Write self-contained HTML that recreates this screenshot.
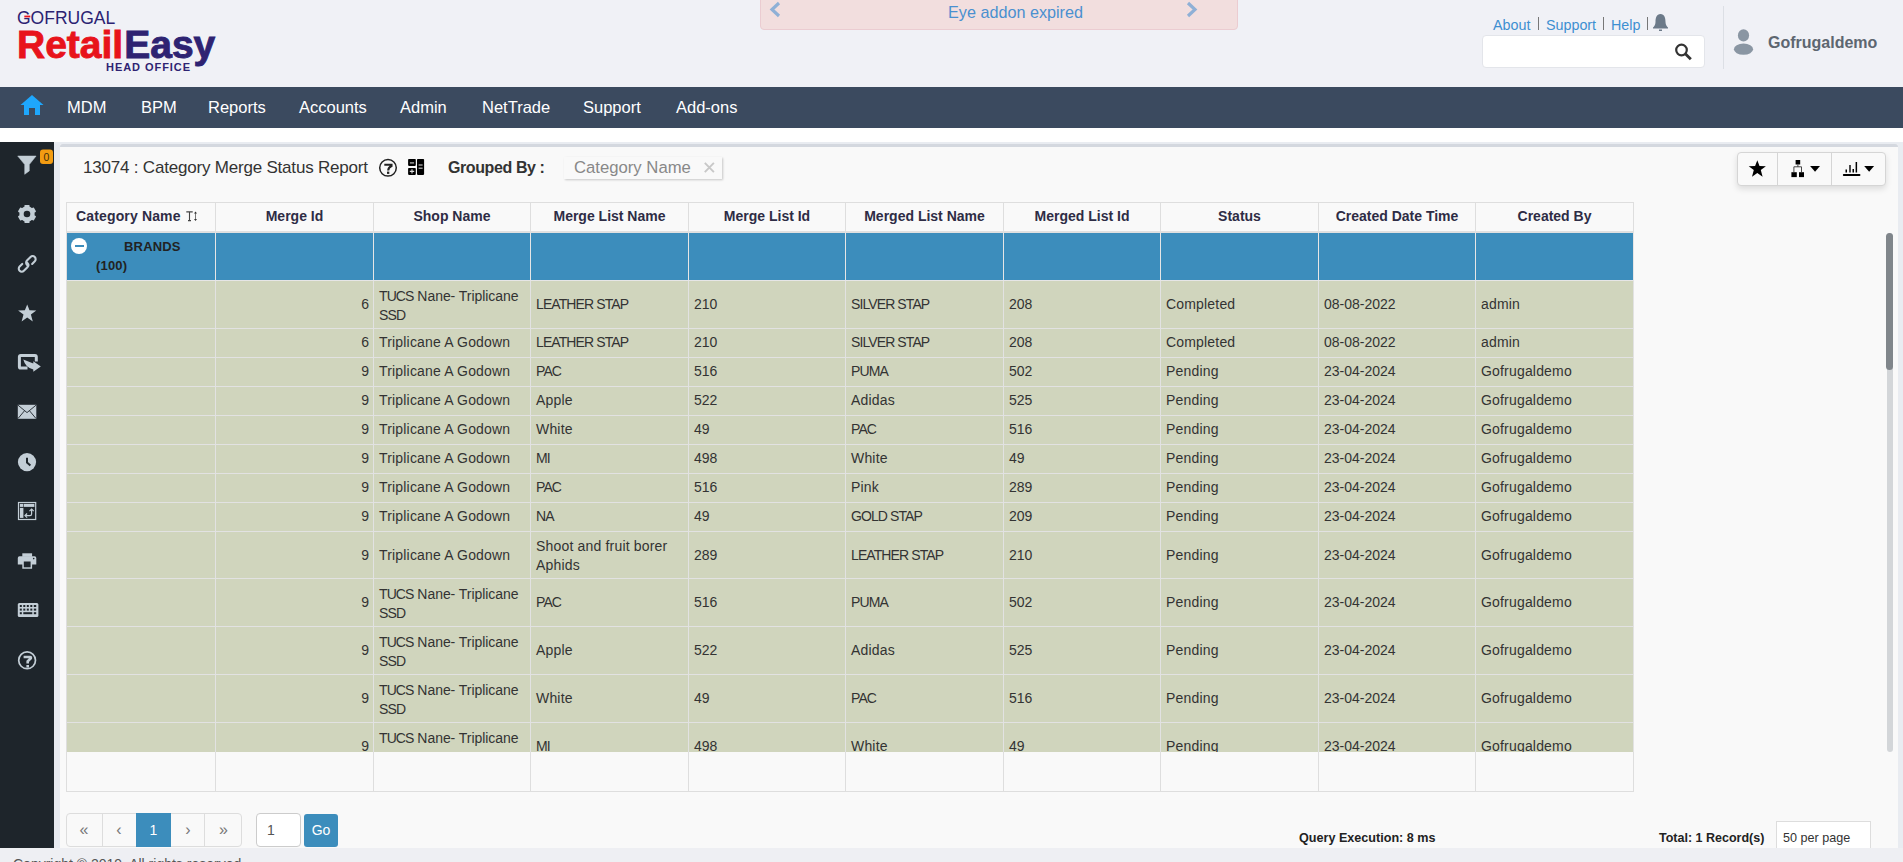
<!DOCTYPE html>
<html><head><meta charset="utf-8">
<style>
*{box-sizing:border-box;margin:0;padding:0}
html,body{width:1903px;height:862px;overflow:hidden;background:#eeeff3;font-family:"Liberation Sans",sans-serif;color:#333;position:relative}
.a{position:absolute;white-space:nowrap}
#hdr{position:absolute;left:0;top:0;width:1903px;height:87px;background:#f0f1f6}
#nav{position:absolute;left:0;top:87px;width:1903px;height:41px;background:#3b4a5f}
#white{position:absolute;left:0;top:128px;width:1903px;height:14px;background:#fff}
#side{position:absolute;left:0;top:142px;width:54px;height:706px;background:#1e252b}
#panel{position:absolute;left:60px;top:144px;width:1838px;height:704px;background:#f9f9f9;border-top:3px solid #d4d8df;border-radius:3px 3px 0 0}
.nv{position:absolute;top:95px;color:#fff;font-size:16.5px;line-height:24px}
#banner{position:absolute;left:760px;top:-4px;width:478px;height:34px;background:#f2dede;border:1px solid #ebccd1;border-radius:4px}
.lnk{color:#3d8fd1;font-size:14.3px}
.sep{position:absolute;width:1px;background:#777}
#search{position:absolute;left:1482px;top:35px;width:223px;height:33px;background:#fff;border:1px solid #e3e5ea;border-radius:4px}
#tbl{position:absolute;left:66px;top:202px;width:1568px;height:590px}
#thead{position:absolute;left:0;top:0;width:1568px;height:31px;background:#f9f9f9;border-top:1px solid #dedede;border-left:1px solid #dedede}
.h{position:absolute;top:0;height:30px;border-right:1px solid #dedede;border-bottom:2px solid #e0e0e0;font-weight:bold;font-size:14px;line-height:18px;padding-top:4px;color:#2e2c45}
.hc{text-align:center}
.hl{padding-left:9px;letter-spacing:0.15px}
.srt{font-weight:normal;font-family:"Liberation Serif",serif;font-size:13px;margin-left:3px}
.ar{font-family:"Liberation Sans",sans-serif;font-size:11px;margin-left:-1px}
#tbody{position:absolute;left:0;top:31px;width:1568px;height:519px;overflow:hidden;border-left:1px solid #dedede}
.row{position:absolute;left:0;width:1567px;background:#d0d5bd}
.grp{background:#3c8dbc}
.one .c{padding-bottom:2px}
.two .c.ml{padding-top:2px}
.c{position:absolute;top:0;bottom:0;border-right:1px solid #e2e2e2;border-bottom:1px solid #e2e2e2;font-size:14px;line-height:18.7px;display:flex;align-items:center;padding:0 5px;white-space:nowrap;color:#333}
.c.r{justify-content:flex-end;padding-right:4px}
.u{letter-spacing:-0.9px}
.d{letter-spacing:0}
.c{letter-spacing:0.18px}
.grp .c{border-right-color:#e6e6e6;border-bottom-color:#e6e6e6}
.minus{position:absolute;left:4px;top:5px;width:16px;height:16px;border-radius:50%;background:#fff}
.minus:after{content:"";position:absolute;left:3.5px;top:7px;width:9px;height:2px;background:#3c8dbc}
.gt{position:absolute;font-weight:bold;font-size:13px;line-height:19px;color:#222}
#tfoot{position:absolute;left:0;top:550px;width:1568px;height:40px;background:#f9f9f9}
.fc{position:absolute;top:0;height:40px;border-left:1px solid #dedede;border-right:1px solid #dedede;border-bottom:1px solid #dedede}
.ink{fill:#c3ced6}
</style></head><body>
<div id="hdr"></div>
<div id="nav"></div>
<div id="white"></div>
<div id="side"></div>
<div id="panel"></div>
<div class="a" style="left:54px;top:142px;width:6px;height:706px;background:#e7eaf0"></div>
<div class="a" style="left:1898px;top:142px;width:5px;height:706px;background:#e9ecf1"></div>
<div class="a" style="left:54px;top:142px;width:1849px;height:2px;background:#e9ecf1"></div>

<!-- logo -->
<div class="a" style="left:17px;top:8px;font-size:17.5px;line-height:20px;color:#2b2272;letter-spacing:0px">GOFRUGAL</div>
<div class="a" style="left:17px;top:22px;font-size:39px;line-height:46px;font-weight:bold;letter-spacing:0px;-webkit-text-stroke:0.9px"><span style="color:#e8131b;-webkit-text-stroke-color:#e8131b">Retail</span><span style="color:#2e2372;-webkit-text-stroke-color:#2e2372;margin-left:1px">Easy</span></div>
<div class="a" style="left:106px;top:60px;font-size:11px;line-height:14px;font-weight:bold;color:#2e2372;letter-spacing:0.95px">HEAD OFFICE</div>

<!-- banner -->
<div id="banner"></div>
<div class="a" style="left:948px;top:1px;font-size:16.2px;line-height:22px;color:#4a90d0">Eye addon expired</div>

<!-- top links -->
<div class="a lnk" style="left:1493px;top:15.5px;line-height:18px">About</div>
<div class="sep" style="left:1538px;top:17px;height:13px"></div>
<div class="a lnk" style="left:1546px;top:15.5px;line-height:18px">Support</div>
<div class="sep" style="left:1603px;top:17px;height:13px"></div>
<div class="a lnk" style="left:1611px;top:15.5px;line-height:18px">Help</div>
<div class="sep" style="left:1647px;top:17px;height:13px"></div>
<div id="search"></div>
<div class="a" style="left:1723px;top:6px;width:1px;height:63px;background:#dcdfe5"></div>
<div class="a" style="left:1768px;top:33px;font-size:16px;line-height:20px;font-weight:bold;color:#5d6670">Gofrugaldemo</div>

<!-- nav -->
<div class="nv" style="left:67px">MDM</div>
<div class="nv" style="left:141px">BPM</div>
<div class="nv" style="left:208px">Reports</div>
<div class="nv" style="left:299px">Accounts</div>
<div class="nv" style="left:400px">Admin</div>
<div class="nv" style="left:482px">NetTrade</div>
<div class="nv" style="left:583px">Support</div>
<div class="nv" style="left:676px">Add-ons</div>

<!-- title bar -->
<div class="a" style="left:83px;top:158px;font-size:17px;line-height:20px;letter-spacing:-0.2px;color:#333">13074 : Category Merge Status Report</div>
<div class="a" style="left:448px;top:158px;font-size:16px;line-height:20px;font-weight:bold;letter-spacing:-0.4px;color:#333">Grouped By :</div>
<div class="a" style="left:564px;top:157px;width:158px;height:22px;box-shadow:1px 1px 2px #c8c8c8"></div>
<div class="a" style="left:574px;top:158px;font-size:16.7px;line-height:20px;color:#888">Category Name</div>

<!-- toolbar -->
<div class="a" style="left:1737px;top:152px;width:149px;height:34px;border:1px solid #d5d5d5;border-radius:4px;background:#f9f9f9;box-shadow:0 3px 6px rgba(0,0,0,0.12)"></div>
<div class="a" style="left:1777px;top:153px;width:1px;height:32px;background:#d5d5d5"></div>
<div class="a" style="left:1831px;top:153px;width:1px;height:32px;background:#d5d5d5"></div>

<!-- table -->
<div id="tbl">
<div id="thead"><div class="h hl" style="left:0px;width:149px">Category Name</div><div class="h hc" style="left:149px;width:158px">Merge Id</div><div class="h hc" style="left:307px;width:157px">Shop Name</div><div class="h hc" style="left:464px;width:158px">Merge List Name</div><div class="h hc" style="left:622px;width:157px">Merge List Id</div><div class="h hc" style="left:779px;width:158px">Merged List Name</div><div class="h hc" style="left:937px;width:157px">Merged List Id</div><div class="h hc" style="left:1094px;width:158px">Status</div><div class="h hc" style="left:1252px;width:157px">Created Date Time</div><div class="h hc" style="left:1409px;width:158px">Created By</div></div>
<div id="tbody">
<div class="row grp" style="top:0px;height:48px"><div class="c l" style="left:0px;width:149px"><span class="minus"></span><span class="gt" style="left:57px;top:4px">BRANDS</span><span class="gt" style="left:29px;top:22.5px">(100)</span></div><div class="c l" style="left:149px;width:158px"></div><div class="c l" style="left:307px;width:157px"></div><div class="c l" style="left:464px;width:158px"></div><div class="c l" style="left:622px;width:157px"></div><div class="c l" style="left:779px;width:158px"></div><div class="c l" style="left:937px;width:157px"></div><div class="c l" style="left:1094px;width:158px"></div><div class="c l" style="left:1252px;width:157px"></div><div class="c l" style="left:1409px;width:158px"></div></div><div class="row two" style="top:48px;height:48px"><div class="c l" style="left:0px;width:149px"></div><div class="c r" style="left:149px;width:158px"><div><span class="d">6</span></div></div><div class="c l ml" style="left:307px;width:157px"><div><span class="u">TUCS</span><span style="letter-spacing:-0.05px"> Nane- Triplicane</span><br><span class="u">SSD</span></div></div><div class="c l" style="left:464px;width:158px"><div><span class="u">LEATHER STAP</span></div></div><div class="c l" style="left:622px;width:157px"><div><span class="d">210</span></div></div><div class="c l" style="left:779px;width:158px"><div><span class="u">SILVER STAP</span></div></div><div class="c l" style="left:937px;width:157px"><div><span class="d">208</span></div></div><div class="c l" style="left:1094px;width:158px"><div>Completed</div></div><div class="c l" style="left:1252px;width:157px"><div><span class="d">08-08-2022</span></div></div><div class="c l" style="left:1409px;width:158px"><div>admin</div></div></div><div class="row one" style="top:96px;height:29px"><div class="c l" style="left:0px;width:149px"></div><div class="c r" style="left:149px;width:158px"><div><span class="d">6</span></div></div><div class="c l" style="left:307px;width:157px"><div>Triplicane A Godown</div></div><div class="c l" style="left:464px;width:158px"><div><span class="u">LEATHER STAP</span></div></div><div class="c l" style="left:622px;width:157px"><div><span class="d">210</span></div></div><div class="c l" style="left:779px;width:158px"><div><span class="u">SILVER STAP</span></div></div><div class="c l" style="left:937px;width:157px"><div><span class="d">208</span></div></div><div class="c l" style="left:1094px;width:158px"><div>Completed</div></div><div class="c l" style="left:1252px;width:157px"><div><span class="d">08-08-2022</span></div></div><div class="c l" style="left:1409px;width:158px"><div>admin</div></div></div><div class="row one" style="top:125px;height:29px"><div class="c l" style="left:0px;width:149px"></div><div class="c r" style="left:149px;width:158px"><div><span class="d">9</span></div></div><div class="c l" style="left:307px;width:157px"><div>Triplicane A Godown</div></div><div class="c l" style="left:464px;width:158px"><div><span class="u">PAC</span></div></div><div class="c l" style="left:622px;width:157px"><div><span class="d">516</span></div></div><div class="c l" style="left:779px;width:158px"><div><span class="u">PUMA</span></div></div><div class="c l" style="left:937px;width:157px"><div><span class="d">502</span></div></div><div class="c l" style="left:1094px;width:158px"><div>Pending</div></div><div class="c l" style="left:1252px;width:157px"><div><span class="d">23-04-2024</span></div></div><div class="c l" style="left:1409px;width:158px"><div>Gofrugaldemo</div></div></div><div class="row one" style="top:154px;height:29px"><div class="c l" style="left:0px;width:149px"></div><div class="c r" style="left:149px;width:158px"><div><span class="d">9</span></div></div><div class="c l" style="left:307px;width:157px"><div>Triplicane A Godown</div></div><div class="c l" style="left:464px;width:158px"><div>Apple</div></div><div class="c l" style="left:622px;width:157px"><div><span class="d">522</span></div></div><div class="c l" style="left:779px;width:158px"><div>Adidas</div></div><div class="c l" style="left:937px;width:157px"><div><span class="d">525</span></div></div><div class="c l" style="left:1094px;width:158px"><div>Pending</div></div><div class="c l" style="left:1252px;width:157px"><div><span class="d">23-04-2024</span></div></div><div class="c l" style="left:1409px;width:158px"><div>Gofrugaldemo</div></div></div><div class="row one" style="top:183px;height:29px"><div class="c l" style="left:0px;width:149px"></div><div class="c r" style="left:149px;width:158px"><div><span class="d">9</span></div></div><div class="c l" style="left:307px;width:157px"><div>Triplicane A Godown</div></div><div class="c l" style="left:464px;width:158px"><div>White</div></div><div class="c l" style="left:622px;width:157px"><div><span class="d">49</span></div></div><div class="c l" style="left:779px;width:158px"><div><span class="u">PAC</span></div></div><div class="c l" style="left:937px;width:157px"><div><span class="d">516</span></div></div><div class="c l" style="left:1094px;width:158px"><div>Pending</div></div><div class="c l" style="left:1252px;width:157px"><div><span class="d">23-04-2024</span></div></div><div class="c l" style="left:1409px;width:158px"><div>Gofrugaldemo</div></div></div><div class="row one" style="top:212px;height:29px"><div class="c l" style="left:0px;width:149px"></div><div class="c r" style="left:149px;width:158px"><div><span class="d">9</span></div></div><div class="c l" style="left:307px;width:157px"><div>Triplicane A Godown</div></div><div class="c l" style="left:464px;width:158px"><div><span class="u">MI</span></div></div><div class="c l" style="left:622px;width:157px"><div><span class="d">498</span></div></div><div class="c l" style="left:779px;width:158px"><div>White</div></div><div class="c l" style="left:937px;width:157px"><div><span class="d">49</span></div></div><div class="c l" style="left:1094px;width:158px"><div>Pending</div></div><div class="c l" style="left:1252px;width:157px"><div><span class="d">23-04-2024</span></div></div><div class="c l" style="left:1409px;width:158px"><div>Gofrugaldemo</div></div></div><div class="row one" style="top:241px;height:29px"><div class="c l" style="left:0px;width:149px"></div><div class="c r" style="left:149px;width:158px"><div><span class="d">9</span></div></div><div class="c l" style="left:307px;width:157px"><div>Triplicane A Godown</div></div><div class="c l" style="left:464px;width:158px"><div><span class="u">PAC</span></div></div><div class="c l" style="left:622px;width:157px"><div><span class="d">516</span></div></div><div class="c l" style="left:779px;width:158px"><div>Pink</div></div><div class="c l" style="left:937px;width:157px"><div><span class="d">289</span></div></div><div class="c l" style="left:1094px;width:158px"><div>Pending</div></div><div class="c l" style="left:1252px;width:157px"><div><span class="d">23-04-2024</span></div></div><div class="c l" style="left:1409px;width:158px"><div>Gofrugaldemo</div></div></div><div class="row one" style="top:270px;height:29px"><div class="c l" style="left:0px;width:149px"></div><div class="c r" style="left:149px;width:158px"><div><span class="d">9</span></div></div><div class="c l" style="left:307px;width:157px"><div>Triplicane A Godown</div></div><div class="c l" style="left:464px;width:158px"><div><span class="u">NA</span></div></div><div class="c l" style="left:622px;width:157px"><div><span class="d">49</span></div></div><div class="c l" style="left:779px;width:158px"><div><span class="u">GOLD STAP</span></div></div><div class="c l" style="left:937px;width:157px"><div><span class="d">209</span></div></div><div class="c l" style="left:1094px;width:158px"><div>Pending</div></div><div class="c l" style="left:1252px;width:157px"><div><span class="d">23-04-2024</span></div></div><div class="c l" style="left:1409px;width:158px"><div>Gofrugaldemo</div></div></div><div class="row two" style="top:299px;height:47px"><div class="c l" style="left:0px;width:149px"></div><div class="c r" style="left:149px;width:158px"><div><span class="d">9</span></div></div><div class="c l" style="left:307px;width:157px"><div>Triplicane A Godown</div></div><div class="c l ml" style="left:464px;width:158px"><div>Shoot and fruit borer<br>Aphids</div></div><div class="c l" style="left:622px;width:157px"><div><span class="d">289</span></div></div><div class="c l" style="left:779px;width:158px"><div><span class="u">LEATHER STAP</span></div></div><div class="c l" style="left:937px;width:157px"><div><span class="d">210</span></div></div><div class="c l" style="left:1094px;width:158px"><div>Pending</div></div><div class="c l" style="left:1252px;width:157px"><div><span class="d">23-04-2024</span></div></div><div class="c l" style="left:1409px;width:158px"><div>Gofrugaldemo</div></div></div><div class="row two" style="top:346px;height:48px"><div class="c l" style="left:0px;width:149px"></div><div class="c r" style="left:149px;width:158px"><div><span class="d">9</span></div></div><div class="c l ml" style="left:307px;width:157px"><div><span class="u">TUCS</span><span style="letter-spacing:-0.05px"> Nane- Triplicane</span><br><span class="u">SSD</span></div></div><div class="c l" style="left:464px;width:158px"><div><span class="u">PAC</span></div></div><div class="c l" style="left:622px;width:157px"><div><span class="d">516</span></div></div><div class="c l" style="left:779px;width:158px"><div><span class="u">PUMA</span></div></div><div class="c l" style="left:937px;width:157px"><div><span class="d">502</span></div></div><div class="c l" style="left:1094px;width:158px"><div>Pending</div></div><div class="c l" style="left:1252px;width:157px"><div><span class="d">23-04-2024</span></div></div><div class="c l" style="left:1409px;width:158px"><div>Gofrugaldemo</div></div></div><div class="row two" style="top:394px;height:48px"><div class="c l" style="left:0px;width:149px"></div><div class="c r" style="left:149px;width:158px"><div><span class="d">9</span></div></div><div class="c l ml" style="left:307px;width:157px"><div><span class="u">TUCS</span><span style="letter-spacing:-0.05px"> Nane- Triplicane</span><br><span class="u">SSD</span></div></div><div class="c l" style="left:464px;width:158px"><div>Apple</div></div><div class="c l" style="left:622px;width:157px"><div><span class="d">522</span></div></div><div class="c l" style="left:779px;width:158px"><div>Adidas</div></div><div class="c l" style="left:937px;width:157px"><div><span class="d">525</span></div></div><div class="c l" style="left:1094px;width:158px"><div>Pending</div></div><div class="c l" style="left:1252px;width:157px"><div><span class="d">23-04-2024</span></div></div><div class="c l" style="left:1409px;width:158px"><div>Gofrugaldemo</div></div></div><div class="row two" style="top:442px;height:48px"><div class="c l" style="left:0px;width:149px"></div><div class="c r" style="left:149px;width:158px"><div><span class="d">9</span></div></div><div class="c l ml" style="left:307px;width:157px"><div><span class="u">TUCS</span><span style="letter-spacing:-0.05px"> Nane- Triplicane</span><br><span class="u">SSD</span></div></div><div class="c l" style="left:464px;width:158px"><div>White</div></div><div class="c l" style="left:622px;width:157px"><div><span class="d">49</span></div></div><div class="c l" style="left:779px;width:158px"><div><span class="u">PAC</span></div></div><div class="c l" style="left:937px;width:157px"><div><span class="d">516</span></div></div><div class="c l" style="left:1094px;width:158px"><div>Pending</div></div><div class="c l" style="left:1252px;width:157px"><div><span class="d">23-04-2024</span></div></div><div class="c l" style="left:1409px;width:158px"><div>Gofrugaldemo</div></div></div><div class="row two" style="top:490px;height:48px"><div class="c l" style="left:0px;width:149px"></div><div class="c r" style="left:149px;width:158px"><div><span class="d">9</span></div></div><div class="c l ml" style="left:307px;width:157px"><div><span class="u">TUCS</span><span style="letter-spacing:-0.05px"> Nane- Triplicane</span><br><span class="u">SSD</span></div></div><div class="c l" style="left:464px;width:158px"><div><span class="u">MI</span></div></div><div class="c l" style="left:622px;width:157px"><div><span class="d">498</span></div></div><div class="c l" style="left:779px;width:158px"><div>White</div></div><div class="c l" style="left:937px;width:157px"><div><span class="d">49</span></div></div><div class="c l" style="left:1094px;width:158px"><div>Pending</div></div><div class="c l" style="left:1252px;width:157px"><div><span class="d">23-04-2024</span></div></div><div class="c l" style="left:1409px;width:158px"><div>Gofrugaldemo</div></div></div>
</div>
<div id="tfoot"><div class="fc" style="left:0px;width:150px"></div><div class="fc" style="left:149px;width:159px"></div><div class="fc" style="left:307px;width:158px"></div><div class="fc" style="left:464px;width:159px"></div><div class="fc" style="left:622px;width:158px"></div><div class="fc" style="left:779px;width:159px"></div><div class="fc" style="left:937px;width:158px"></div><div class="fc" style="left:1094px;width:159px"></div><div class="fc" style="left:1252px;width:158px"></div><div class="fc" style="left:1409px;width:159px"></div></div>
</div>

<!-- scrollbar -->
<div class="a" style="left:1887px;top:233px;width:6px;height:519px;background:#d3d6d9;border-radius:3px"></div>
<div class="a" style="left:1886px;top:233px;width:7px;height:137px;background:#80868b;border-radius:4px"></div>

<!-- pagination -->
<div class="a" style="left:66px;top:813px;width:176px;height:34px;border:1px solid #dddddd;border-radius:4px;background:#f9f9f9"></div>
<div class="a" style="left:102px;top:813px;width:1px;height:34px;background:#ddd"></div>
<div class="a" style="left:204px;top:813px;width:1px;height:34px;background:#ddd"></div>
<div class="a" style="left:136px;top:813px;width:35px;height:34px;background:#3c8dbc"></div>
<div class="a" style="left:66px;top:813px;width:36px;height:34px;text-align:center;font-size:16px;line-height:33px;color:#777">&#171;</div>
<div class="a" style="left:102px;top:813px;width:34px;height:34px;text-align:center;font-size:16px;line-height:33px;color:#777">&#8249;</div>
<div class="a" style="left:136px;top:813px;width:35px;height:34px;text-align:center;font-size:14px;line-height:34px;color:#fff">1</div>
<div class="a" style="left:171px;top:813px;width:34px;height:34px;text-align:center;font-size:16px;line-height:33px;color:#777">&#8250;</div>
<div class="a" style="left:205px;top:813px;width:37px;height:34px;text-align:center;font-size:16px;line-height:33px;color:#777">&#187;</div>
<div class="a" style="left:256px;top:813px;width:45px;height:34px;border:1px solid #ccc;border-radius:4px;background:#fff;font-size:14px;line-height:32px;padding-left:10px;color:#555">1</div>
<div class="a" style="left:304px;top:814px;width:34px;height:33px;border-radius:3px;background:#3c8dbc;font-size:14px;line-height:33px;text-align:center;color:#fff">Go</div>

<div class="a" style="left:1299px;top:830px;font-size:12.6px;line-height:16px;font-weight:bold;color:#222">Query Execution: 8 ms</div>
<div class="a" style="left:1659px;top:830px;font-size:12.5px;line-height:16px;font-weight:bold;color:#222">Total: 1 Record(s)</div>
<div class="a" style="left:1776px;top:821px;width:95px;height:27px;border:1px solid #ddd;border-bottom:none;background:#fff;font-size:12.6px;line-height:16px;padding:8px 0 0 6px;color:#333;overflow:hidden">50 per page</div>

<!-- footer -->
<div class="a" style="left:13px;top:856px;font-size:14px;line-height:16px;color:#555">Copyright &#169; 2019. All rights reserved.</div>

<!-- icons overlay -->
<svg class="a" style="left:0;top:0" width="1903" height="862" viewBox="0 0 1903 862">
  <rect x="24.3" y="15.6" width="6" height="1.8" fill="#e8131b"/>
  <!-- home -->
  <path d="M20.5,105 L32,95 L43.5,105 Z" fill="#1ea7fd"/>
  <path d="M24,104 H40 V115 H35 V108 H29 V115 H24 Z" fill="#1ea7fd"/>
  <!-- banner chevrons -->
  <polyline points="779,3 772,9.5 779,16" fill="none" stroke="#8fb0d6" stroke-width="3.2"/>
  <polyline points="1188,3 1195,9.5 1188,16" fill="none" stroke="#8fb0d6" stroke-width="3.2"/>
  <!-- bell -->
  <path d="M1660.5,14 C1664.5,14 1665.5,18 1665.5,22 C1665.5,25 1667,26.5 1668,27.5 L1668,28.5 L1653,28.5 L1653,27.5 C1654,26.5 1655.5,25 1655.5,22 C1655.5,18 1656.5,14 1660.5,14 Z" fill="#6c7a89"/>
  <rect x="1659" y="29.5" width="3" height="1.5" fill="#6c7a89"/>
  <!-- search -->
  <circle cx="1681.5" cy="50" r="5.3" fill="none" stroke="#333" stroke-width="2.2"/>
  <line x1="1685.3" y1="53.8" x2="1690.8" y2="59.3" stroke="#333" stroke-width="2.8"/>
  <!-- user -->
  <ellipse cx="1743.5" cy="35.4" rx="5.6" ry="6.2" fill="#8a96a3"/>
  <ellipse cx="1743.5" cy="49.2" rx="9.6" ry="5.6" fill="#8a96a3"/>

  <!-- sidebar badge -->
  <rect x="40" y="149.5" width="13" height="14.5" rx="3" fill="#f39c12"/>
  <text x="46.5" y="160.5" font-family="Liberation Sans" font-size="10.5" text-anchor="middle" fill="#3b2c0c">0</text>
  <!-- filter -->
  <path d="M17.7,156 L36.1,156 L29.3,164.6 L29.3,170.9 L24.7,174.3 L24.7,164.6 Z" fill="#c3ced6" stroke="#c3ced6" stroke-width="0.5" stroke-linejoin="round"/>
  <!-- gear -->
  <g fill="#c3ced6" transform="translate(27,214)">
    <circle r="7.7"/>
    <rect x="-2.5" y="-9.1" width="5" height="18.2" rx="0.6"/>
    <rect x="-2.5" y="-9.1" width="5" height="18.2" rx="0.6" transform="rotate(60)"/>
    <rect x="-2.5" y="-9.1" width="5" height="18.2" rx="0.6" transform="rotate(120)"/>
    <circle r="3.3" fill="#1e252b"/>
  </g>
  <!-- link -->
  <g fill="none" stroke="#c3ced6" stroke-width="2.1" stroke-linecap="round" transform="translate(27.2,263.9) rotate(-45)">
    <path d="M0.8,-1 V-0.5 A3,3 0 0 1 -2.2,2.5 H-7.2 A3,3 0 0 1 -7.2,-3.5 H-3.5"/>
    <path d="M-0.8,1 V0.5 A3,3 0 0 1 2.2,-2.5 H7.2 A3,3 0 0 1 7.2,3.5 H3.5"/>
  </g>
  <!-- star -->
  <path d="M27.2,304.6 L29.5,310.3 L36.3,310.6 L30.9,314.6 L32.8,321.5 L27.2,317.6 L21.6,321.5 L23.5,314.6 L18.1,310.6 L24.9,310.3 Z" fill="#c3ced6"/>
  <!-- share -->
  <path d="M27.5,368.1 H20.8 Q19.4,368.1 19.4,366.7 V356.8 Q19.4,355.4 20.8,355.4 H34.9 Q36.3,355.4 36.3,356.8 V361.5" fill="none" stroke="#c3ced6" stroke-width="3"/>
  <path d="M23.3,359.6 L33.3,363.4 L33.3,361.2 L40.8,366.4 L33.3,371.7 L33.3,369.4 Q25.5,368 23.3,359.6 Z" fill="#c3ced6"/>
  <!-- envelope -->
  <rect x="17.8" y="404.8" width="18.5" height="14" fill="#c3ced6"/>
  <path d="M18,405.2 L27,412.6 L36,405.2 M18,418.5 L24.3,411 M36,418.5 L29.7,411" fill="none" stroke="#1e252b" stroke-width="0.9"/>
  <!-- clock -->
  <circle cx="27" cy="462.1" r="9.1" fill="#c3ced6"/>
  <path d="M27,457.8 V462.6 L30.4,465.4" fill="none" stroke="#1e252b" stroke-width="2" stroke-linejoin="miter"/>
  <!-- table sync -->
  <rect x="18.5" y="502.5" width="17.2" height="17" fill="none" stroke="#c3ced6" stroke-width="1.2"/>
  <rect x="19.9" y="503.9" width="3.5" height="3" fill="#c3ced6"/>
  <rect x="24" y="503.9" width="10.4" height="3" fill="#c3ced6"/>
  <rect x="19.9" y="507.9" width="3.5" height="10" fill="#c3ced6"/>
  <path d="M25.5,515.6 H30 Q31.6,515.6 31.6,514 V509.5" fill="none" stroke="#c3ced6" stroke-width="1.2"/>
  <path d="M27.1,513.5 L25,515.6 L27.1,517.7 M29.5,511.1 L31.6,509 L33.7,511.1" fill="none" stroke="#c3ced6" stroke-width="1.2"/>
  <!-- printer -->
  <rect x="22.3" y="553.3" width="9.8" height="3.5" fill="#c3ced6"/>
  <path d="M17.8,558 Q17.8,556.3 19.5,556.3 L34.6,556.3 Q36.3,556.3 36.3,558 L36.3,564.6 L32.1,564.6 L32.1,568.7 L22.3,568.7 L22.3,564.6 L17.8,564.6 Z" fill="#c3ced6"/>
  <rect x="23.8" y="561.5" width="6.8" height="5.8" fill="#1e252b"/>
  <circle cx="33.7" cy="558.6" r="0.8" fill="#1e252b"/>
  <!-- keyboard -->
  <rect x="17.8" y="603" width="20.6" height="14.1" rx="1.5" fill="#c3ced6"/>
  <g fill="#1e252b">
    <rect x="19.8" y="605" width="2" height="2"/><rect x="23.3" y="605" width="2" height="2"/><rect x="26.8" y="605" width="2" height="2"/><rect x="30.3" y="605" width="2" height="2"/><rect x="33.8" y="605" width="2.4" height="2"/>
    <rect x="19.8" y="608.6" width="2" height="2"/><rect x="23.3" y="608.6" width="2" height="2"/><rect x="26.8" y="608.6" width="2" height="2"/><rect x="30.3" y="608.6" width="2" height="2"/><rect x="33.8" y="608.6" width="2.4" height="2"/>
    <rect x="19.8" y="612.2" width="2" height="2"/><rect x="23.3" y="612.2" width="9" height="2"/><rect x="33.8" y="612.2" width="2.4" height="2"/>
  </g>
  <!-- help -->
  <circle cx="27.1" cy="660.3" r="8.4" fill="none" stroke="#c3ced6" stroke-width="1.7"/>
  <path d="M23.6,657 H30.2 Q31.2,657 30.8,658.3 L27.7,661.3 V663.6" fill="none" stroke="#c3ced6" stroke-width="2.6"/>
  <rect x="26.4" y="665" width="2.6" height="2.5" fill="#c3ced6"/>

  <!-- title help icon -->
  <circle cx="388" cy="167.8" r="8.3" fill="none" stroke="#222" stroke-width="1.5"/>
  <path d="M384.3,164.8 L391.5,164.8 L391.5,166 Q388.3,167.5 388.2,170.5" fill="none" stroke="#222" stroke-width="2.1"/>
  <rect x="387" y="171.6" width="2.3" height="2.3" fill="#222"/>
  <!-- calculator -->
  <rect x="408.1" y="158.9" width="7.7" height="7" rx="0.8" fill="#000"/>
  <rect x="408.1" y="168" width="7.7" height="6.9" rx="0.8" fill="#000"/>
  <rect x="417" y="158.9" width="7.1" height="16" rx="0.8" fill="#000"/>
  <rect x="409.9" y="162.3" width="4.2" height="1.2" fill="#bbb"/>
  <rect x="418.6" y="164.4" width="4" height="1.2" fill="#bbb"/>
  <rect x="418.6" y="167.6" width="4" height="1.2" fill="#bbb"/>
  <path d="M412,169.2 V173.6 M409.8,171.4 H414.2" stroke="#ddd" stroke-width="1.1"/>
  <!-- chip x -->
  <path d="M704.8,162.8 L713.9,172.1 M713.9,162.8 L704.8,172.1" stroke="#c8c8c8" stroke-width="1.9"/>
  <!-- sort icon -->
  <path d="M186.3,211.9 H192.7 M189.5,211.9 V220.6 M188,220.6 H191" stroke="#444" stroke-width="1.1" fill="none"/>
  <path d="M195.5,212.5 V220" stroke="#555" stroke-width="0.8"/>
  <path d="M194,213.6 L195.5,211.4 L197,213.6 Z M194,218.9 L195.5,221.1 L197,218.9 Z" fill="#333"/>

  <!-- toolbar star -->
  <path d="M1757.3,160.3 L1759.5,166 L1765.9,166.2 L1760.8,170.1 L1762.6,176.7 L1757.3,173 L1752,176.7 L1753.8,170.1 L1748.7,166.2 L1755.1,166 Z" fill="#000"/>
  <!-- sitemap -->
  <rect x="1795.6" y="160" width="4.6" height="4.5" fill="#000"/>
  <rect x="1791.4" y="172.2" width="5.4" height="4.9" fill="#000"/>
  <rect x="1799" y="172.2" width="5" height="4.9" fill="#000"/>
  <path d="M1797.9,164.5 V166.8 M1793.9,172.2 V166.8 H1801.5 V172.2" fill="none" stroke="#333" stroke-width="0.9"/>
  <path d="M1810.1,166 L1820,166 L1815.05,171.8 Z" fill="#000"/>
  <!-- bar chart -->
  <rect x="1842.9" y="174" width="17.5" height="2" rx="0.8" fill="#000"/>
  <rect x="1845.5" y="169.5" width="1.5" height="3" fill="#000"/>
  <rect x="1849.3" y="165" width="1.4" height="7.5" fill="#000"/>
  <rect x="1852.5" y="169" width="1.5" height="3.5" fill="#000"/>
  <rect x="1855.6" y="162" width="1.5" height="10.5" fill="#000"/>
  <path d="M1864.2,166 L1874.1,166 L1869.15,171.8 Z" fill="#000"/>
</svg>
</body></html>
